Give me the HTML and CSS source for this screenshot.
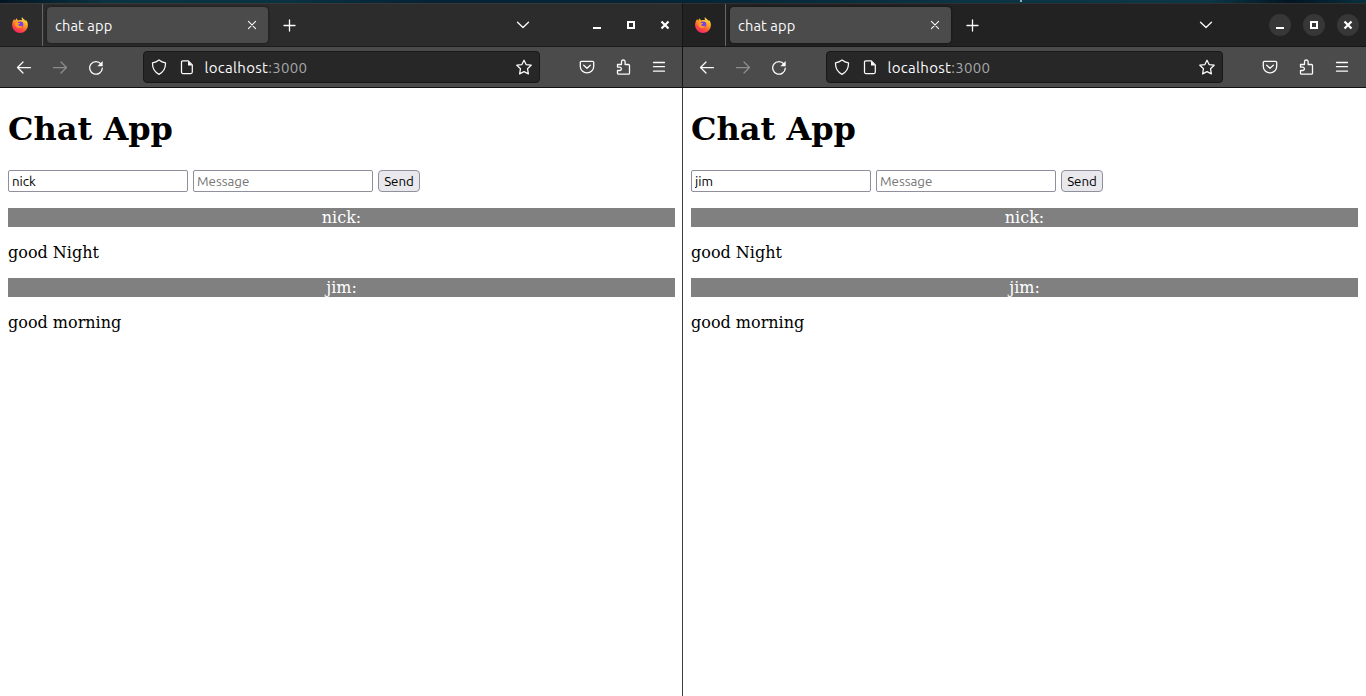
FILE: index.html
```html
<!DOCTYPE html>
<html lang="en">
<head>
<meta charset="utf-8">
<title>chat app</title>
<link rel="stylesheet" href="styles.css">
</head>
<body>
<svg class="defs" width="0" height="0">
  <defs>
    <linearGradient id="flame" x1="0.8" y1="0" x2="0.3" y2="1">
      <stop offset="0" stop-color="#fff04a"/><stop offset="0.4" stop-color="#ffa125"/><stop offset="0.7" stop-color="#ff513c"/><stop offset="1" stop-color="#ef1f68"/>
    </linearGradient>
    <symbol id="fox" viewBox="0 0 16 16">
      <path fill="url(#flame)" d="M10 0c-.6 1.200-.4 2.300.3 3.300C9 2.900 7.600 2.800 6.400 3.400 5.500 3 5 2.200 4.800 1.200 4 1.900 3.500 2.600 3.300 3.500L2 2.300C.8 4 .1 6 .1 8.200a7.900 7.800 0 0 0 15.800 0c0-2.100-.7-4-2-5.300l-.3 1.200C13 2.500 10.600 1.700 10 0z"/>
      <circle cx="8.300" cy="7.400" r="3" fill="#7542e5"/>
      <path fill="#ff9824" d="M3 5.800c1.300-.7 2.200-.5 3 .1l2.200.2c0 1-1.900 1.100-2 2 .7 1.600 3 1.100 4.300.4-.9 2.700-4.500 3.500-6.400 1.200C3 8.500 2.700 7 3 5.800z"/>
    </symbol>
    <symbol id="x" viewBox="0 0 16 16"><path d="M4.400 4.400l7.200 7.200M11.600 4.400l-7.200 7.200" stroke-width="1.050"/></symbol>
    <symbol id="plus" viewBox="0 0 16 16"><path d="M8.500 3v11M3 8.500h11" stroke-width="1.300"/></symbol>
    <symbol id="down" viewBox="0 0 16 16"><path d="M2.500 5.200L8 10.500l5.500-5.300" stroke-width="1.300"/></symbol>
    <symbol id="min" viewBox="0 0 16 16"><path d="M4 11h8" stroke-width="2" stroke-linecap="butt"/></symbol>
    <symbol id="max" viewBox="0 0 16 16"><path d="M5 5h6v6H5z" stroke-width="2" stroke-linejoin="miter"/></symbol>
    <symbol id="close" viewBox="0 0 16 16"><path d="M4.500 4.500l7 7M11.500 4.500l-7 7" stroke-width="2.200" stroke-linecap="butt"/></symbol>
    <symbol id="back" viewBox="0 0 16 16"><path d="M14.500 8.500H1.500M7 3L1.500 8.500 7 14" stroke-width="1.250"/></symbol>
    <symbol id="forward" viewBox="0 0 16 16"><path d="M1.500 8.500h13M9 3L14.500 8.500 9 14" stroke-width="1.250"/></symbol>
    <symbol id="reload" viewBox="0 0 16 16"><path d="M13 5A6.300 6.300 0 1 0 14.300 9.200" stroke-width="1.300"/><path d="M14.700 1.900v5.300H9.400z" fill="currentColor" stroke="none"/></symbol>
    <symbol id="shield" viewBox="0 0 16 16"><path d="M8 .9Q10.800 3.100 14.500 3.900C14.700 8.900 12.400 13.100 8 15.400 3.600 13.100 1.300 8.900 1.500 3.900Q5.200 3.100 8 .9z" stroke-width="1.250"/></symbol>
    <symbol id="page" viewBox="0 0 16 16"><path d="M3.700 1.900h5.600l4 4v7.100a1.500 1.500 0 0 1-1.500 1.500H3.700a1.200 1.200 0 0 1-1.200-1.200V3.100a1.200 1.200 0 0 1 1.200-1.200z" stroke-width="1.250"/><path d="M9 1.700v4.700h4.600z" fill="currentColor" stroke="none"/></symbol>
    <symbol id="star" viewBox="0 0 16 16"><path d="M8 1.200l2.100 4.400 5.100.6-3.700 3.500.9 5.200L8 12.600l-4.400 2.300.9-5.200L.8 6.200l5.100-.6z" stroke-width="1.250"/></symbol>
    <symbol id="pocket" viewBox="0 0 16 16"><path d="M2.500 2.300h11a1.200 1.200 0 0 1 1.200 1.200v3.900a6.700 6.500 0 0 1-13.400 0V3.500a1.200 1.200 0 0 1 1.200-1.200zM4.700 6.200L8 9.300 11.300 6.200" stroke-width="1.300"/></symbol>
    <symbol id="puzzle" viewBox="0 0 16 16"><path d="M2.500 5.500h4V2.800a1.800 1.800 0 0 1 3.600 0v2.700h3.400a1 1 0 0 1 1 1v7.700a1 1 0 0 1-1 1H3.500a1 1 0 0 1-1-1v-2.700h2.200a1.700 1.700 0 0 0 0-3.400H2.500z" stroke-width="1.300"/></symbol>
    <symbol id="menu" viewBox="0 0 16 16"><path d="M2.500 3.500h11M2.500 7.700h11M2.500 12.200h11" stroke-width="1.300"/></symbol>
  </defs>
</svg>
<div class="wallpaper"><i class="speck"></i></div>
<main class="desktop">
  <section class="window">
    <header class="tabs">
      <div class="brand"><svg class="fox"><use href="#fox"/></svg></div>
      <div class="tab"><span class="tab-title">chat app</span><svg class="icon"><use href="#x"/></svg></div>
      <svg class="icon new-tab"><use href="#plus"/></svg>
      <svg class="icon list-tabs"><use href="#down"/></svg>
      <div class="controls"><span><svg class="icon"><use href="#min"/></svg></span><span><svg class="icon"><use href="#max"/></svg></span><span><svg class="icon"><use href="#close"/></svg></span></div>
    </header>
    <nav class="toolbar">
      <span class="tool"><svg class="icon"><use href="#back"/></svg></span><span class="tool off"><svg class="icon"><use href="#forward"/></svg></span><span class="tool"><svg class="icon"><use href="#reload"/></svg></span>
      <div class="url"><svg class="icon"><use href="#shield"/></svg><svg class="icon page-icon"><use href="#page"/></svg><span class="address">localhost<span class="port">:3000</span></span><svg class="icon star"><use href="#star"/></svg></div>
      <span class="tool"><svg class="icon"><use href="#pocket"/></svg></span><span class="tool"><svg class="icon"><use href="#puzzle"/></svg></span><span class="tool"><svg class="icon"><use href="#menu"/></svg></span>
    </nav>
    <article class="page">
      <h1 class="title">Chat App</h1>
      <form class="form"><input class="field" value="nick"><input class="field" placeholder="Message"><button class="send" type="button">Send</button></form>
      <div class="author">nick:</div><p class="message">good Night</p>
      <div class="author">jim:</div><p class="message">good morning</p>
    </article>
  </section>
  <section class="window active">
    <header class="tabs">
      <div class="brand"><svg class="fox"><use href="#fox"/></svg></div>
      <div class="tab"><span class="tab-title">chat app</span><svg class="icon"><use href="#x"/></svg></div>
      <svg class="icon new-tab"><use href="#plus"/></svg>
      <svg class="icon list-tabs"><use href="#down"/></svg>
      <div class="controls"><span><svg class="icon"><use href="#min"/></svg></span><span><svg class="icon"><use href="#max"/></svg></span><span><svg class="icon"><use href="#close"/></svg></span></div>
    </header>
    <nav class="toolbar">
      <span class="tool"><svg class="icon"><use href="#back"/></svg></span><span class="tool off"><svg class="icon"><use href="#forward"/></svg></span><span class="tool"><svg class="icon"><use href="#reload"/></svg></span>
      <div class="url"><svg class="icon"><use href="#shield"/></svg><svg class="icon page-icon"><use href="#page"/></svg><span class="address">localhost<span class="port">:3000</span></span><svg class="icon star"><use href="#star"/></svg></div>
      <span class="tool"><svg class="icon"><use href="#pocket"/></svg></span><span class="tool"><svg class="icon"><use href="#puzzle"/></svg></span><span class="tool"><svg class="icon"><use href="#menu"/></svg></span>
    </nav>
    <article class="page">
      <h1 class="title">Chat App</h1>
      <form class="form"><input class="field" value="jim"><input class="field" placeholder="Message"><button class="send" type="button">Send</button></form>
      <div class="author">nick:</div><p class="message">good Night</p>
      <div class="author">jim:</div><p class="message">good morning</p>
    </article>
  </section>
</main>
</body>
</html>
```
FILE: styles.css
```css
* { box-sizing: border-box; }
body { margin: 0; height: 696px; overflow: hidden; background: #fff; font-family: Ubuntu, "Noto Sans", sans-serif; }
.defs { position: absolute; }
.wallpaper { height: 3px; background: linear-gradient(90deg, #041522 0, #0b3443 110px, #0a3341 280px, #052334 430px, #052638 700px, #0b3444 960px, #0c3746 1210px, #031522 1290px, #08303f 1366px); }
.speck { display: block; width: 2px; height: 2px; margin-left: 1020px; background: #8fb0b8; }
.desktop { display: flex; height: 693px; }
.window { width: 683px; display: flex; flex-direction: column; box-shadow: inset -1px 0 #3c3c3e; }
.window.active { box-shadow: none; }
.tabs { height: 44px; display: flex; align-items: center; background: #2c2c2c; border-top: 1px solid #373737; border-bottom: 1px solid #1b1b1b; color: #fbfbfe; }
.active .tabs { background: #222; border-top-color: #303030; border-bottom-color: #161616; }
.window:first-child .tabs, .window:first-child .toolbar { border-right: 1px solid #151515; }
.brand { width: 43px; height: 100%; padding: 13px 0 0 12px; border-right: 1px solid #666; flex: none; }
.fox { display: block; width: 16px; height: 16px; }
.tab { width: 221px; height: 36px; margin-left: 4px; padding: 0 8px; flex: none; display: flex; align-items: center; justify-content: space-between; border-radius: 4px; background: #4b4b4b; box-shadow: 0 0 3px #0008; }
.tab-title { padding-top: 2px; font-size: 14.67px; line-height: 20px; letter-spacing: .1px; }
.icon { width: 16px; height: 16px; flex: none; fill: none; stroke: currentColor; stroke-width: 1.200; stroke-linecap: round; stroke-linejoin: round; }
.new-tab { margin-left: 13px; }
.list-tabs { margin-left: 218px; }
.controls { display: flex; gap: 12px; margin-left: 55px; color: #fff; }
.controls span { width: 22px; height: 22px; border-radius: 50%; display: grid; place-items: center; }
.active .controls span { background: #373737; }
.toolbar { height: 41px; padding-left: 6px; display: flex; align-items: center; background: #4b4b4b; border-bottom: 1px solid #121212; color: #fbfbfe; }
.tool { width: 36px; height: 36px; flex: none; display: grid; place-items: center; }
.off { color: #8d8d8e; }
.url { width: 397px; height: 32px; flex: none; margin: 0 29px; padding: 0 7px; display: flex; align-items: center; border: 1px solid #191919; border-radius: 4px; background: #272727; }
.page-icon { margin-left: 12px; }
.address { margin-left: 9.5px; padding-top: 2px; font-size: 15px; line-height: 20px; letter-spacing: .3px; }
.port { color: #a5a5a6; }
.star { margin-left: auto; }
.page { padding: 22px 8px 0; font: 16px/19px "DejaVu Serif", serif; color: #000; }
.title { margin: 0 0 22px; font-size: 32px; line-height: 38px; font-weight: bold; }
.form { display: flex; gap: 5px; height: 22px; margin: 0 0 16px; }
.field { width: 180px; height: 22px; padding: 0 3px; border: 1px solid #8f8f9d; border-radius: 2px; background: #fff; color: #000; font: 13.33px/20px Ubuntu, "Noto Sans", sans-serif; }
.field::placeholder { color: #757575; opacity: 1; }
.send { width: 42px; height: 22px; padding: 1px 0 0; border: 1px solid #8f8f9d; border-radius: 4px; background: #e9e9ed; color: #000; font: 13.33px/19px Ubuntu, "Noto Sans", sans-serif; }
.author { background: #808080; color: #fff; text-align: center; }
.message { margin: 16px 0; }
```
